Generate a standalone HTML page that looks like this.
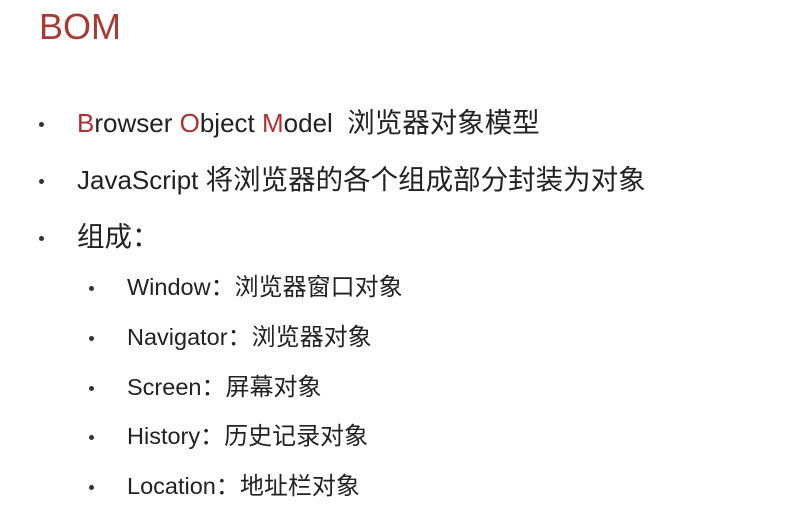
<!DOCTYPE html>
<html><head><meta charset="utf-8"><style>
body{margin:0;width:791px;height:510px;background:#fff;overflow:hidden;position:relative;font-family:"Liberation Sans","Noto Sans CJK SC",sans-serif;color:#222}
.t{position:absolute;left:39px;top:6px;font-size:36px;color:#a83a36}
.l{position:absolute;white-space:nowrap;line-height:1}
.m{left:77px;font-size:26px}
.m .c{font-size:27.5px}
.s{left:127px;font-size:23.5px}
.s .c{font-size:24px}
.b{position:absolute;width:5px;height:5px;border-radius:50%;background:#333}
.r{color:#b03030}
</style></head><body>
<div class="t">BOM</div>
<div class="b" style="left:39px;top:122px"></div>
<div class="l m" style="top:109px"><span class="r">B</span>rowser <span class="r">O</span>bject <span class="r">M</span>odel&nbsp; <span class="c">浏览器对象模型</span></div>
<div class="b" style="left:39px;top:179px"></div>
<div class="l m" style="top:166px">JavaScript <span class="c">将浏览器的各个组成部分封装为对象</span></div>
<div class="b" style="left:39px;top:236px"></div>
<div class="l m" style="top:223px"><span class="c">组成：</span></div>
<div class="b" style="left:89px;top:286px"></div>
<div class="l s" style="top:276px">Window<span class="c">：浏览器窗口对象</span></div>
<div class="b" style="left:89px;top:336px"></div>
<div class="l s" style="top:326px">Navigator<span class="c">：浏览器对象</span></div>
<div class="b" style="left:89px;top:386px"></div>
<div class="l s" style="top:376px">Screen<span class="c">：屏幕对象</span></div>
<div class="b" style="left:89px;top:435px"></div>
<div class="l s" style="top:425px">History<span class="c">：历史记录对象</span></div>
<div class="b" style="left:89px;top:485px"></div>
<div class="l s" style="top:475px">Location<span class="c">：地址栏对象</span></div>
</body></html>
